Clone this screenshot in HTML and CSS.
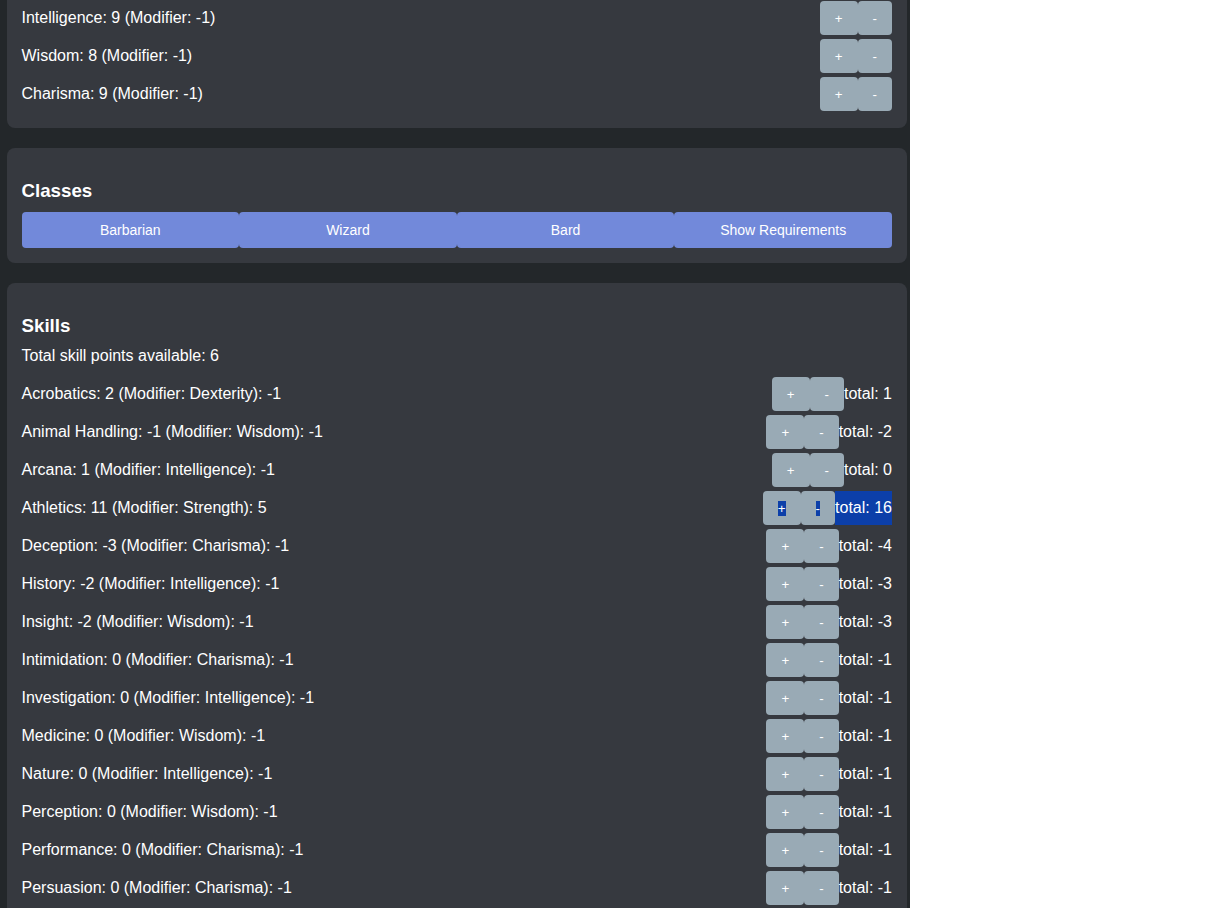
FILE: index.html
```html
<!DOCTYPE html>
<html>
<head>
<meta charset="utf-8">
<title>Character Sheet</title>
<link rel="stylesheet" href="styles.css">
</head>
<body>
<div class="app">
  <section class="panel panel-cut">
    <div class="row"><span class="label">Intelligence: 9 (Modifier: -1)</span><button class="step">+</button><button class="step">-</button></div>
    <div class="row"><span class="label">Wisdom: 8 (Modifier: -1)</span><button class="step">+</button><button class="step">-</button></div>
    <div class="row"><span class="label">Charisma: 9 (Modifier: -1)</span><button class="step">+</button><button class="step">-</button></div>
  </section>

  <section class="panel">
    <h3 class="panel-title">Classes</h3>
    <div class="class-bar">
      <button class="class-btn">Barbarian</button>
      <button class="class-btn">Wizard</button>
      <button class="class-btn">Bard</button>
      <button class="class-btn">Show Requirements</button>
    </div>
  </section>

  <section class="panel">
    <h3 class="panel-title">Skills</h3>
    <p class="points">Total skill points available: 6</p>
    <div class="row"><span class="label">Acrobatics: 2 (Modifier: Dexterity): -1</span><button class="step">+</button><button class="step">-</button><span class="total">total: 1</span></div>
    <div class="row"><span class="label">Animal Handling: -1 (Modifier: Wisdom): -1</span><button class="step">+</button><button class="step">-</button><span class="total">total: -2</span></div>
    <div class="row"><span class="label">Arcana: 1 (Modifier: Intelligence): -1</span><button class="step">+</button><button class="step">-</button><span class="total">total: 0</span></div>
    <div class="row"><span class="label">Athletics: 11 (Modifier: Strength): 5</span><button class="step"><span class="sel">+</span></button><button class="step"><span class="sel">-</span></button><span class="total total-sel">total: 16</span></div>
    <div class="row"><span class="label">Deception: -3 (Modifier: Charisma): -1</span><button class="step">+</button><button class="step">-</button><span class="total">total: -4</span></div>
    <div class="row"><span class="label">History: -2 (Modifier: Intelligence): -1</span><button class="step">+</button><button class="step">-</button><span class="total">total: -3</span></div>
    <div class="row"><span class="label">Insight: -2 (Modifier: Wisdom): -1</span><button class="step">+</button><button class="step">-</button><span class="total">total: -3</span></div>
    <div class="row"><span class="label">Intimidation: 0 (Modifier: Charisma): -1</span><button class="step">+</button><button class="step">-</button><span class="total">total: -1</span></div>
    <div class="row"><span class="label">Investigation: 0 (Modifier: Intelligence): -1</span><button class="step">+</button><button class="step">-</button><span class="total">total: -1</span></div>
    <div class="row"><span class="label">Medicine: 0 (Modifier: Wisdom): -1</span><button class="step">+</button><button class="step">-</button><span class="total">total: -1</span></div>
    <div class="row"><span class="label">Nature: 0 (Modifier: Intelligence): -1</span><button class="step">+</button><button class="step">-</button><span class="total">total: -1</span></div>
    <div class="row"><span class="label">Perception: 0 (Modifier: Wisdom): -1</span><button class="step">+</button><button class="step">-</button><span class="total">total: -1</span></div>
    <div class="row"><span class="label">Performance: 0 (Modifier: Charisma): -1</span><button class="step">+</button><button class="step">-</button><span class="total">total: -1</span></div>
    <div class="row"><span class="label">Persuasion: 0 (Modifier: Charisma): -1</span><button class="step">+</button><button class="step">-</button><span class="total">total: -1</span></div>
  </section>
</div>
</body>
</html>
```

FILE: styles.css
```css
html {
  background: #ffffff;
}

body {
  margin: 0;
  font-family: "Liberation Sans", Arial, sans-serif;
  color: #ffffff;
}

.app {
  width: 910px;
  box-sizing: border-box;
  padding: 0 3px 20px 7px;
  background: #23272a;
  min-height: 100vh;
  display: flex;
  flex-direction: column;
  gap: 20px;
}

.panel {
  display: flex;
  flex-direction: column;
  background: #36393f;
  border-radius: 8px;
  padding: 15px 15px 15px 14.5px;
}

.panel-cut {
  margin-top: -1px;
  padding-top: 0;
  border-radius: 0 0 8px 8px;
}

.panel-title {
  margin: 17px 0 10px;
  font-size: 18.72px;
  font-weight: bold;
}

.points {
  margin: 0 0 10px;
  font-size: 16px;
}

.row {
  display: flex;
  align-items: center;
  height: 34px;
  margin: 2px 0;
  font-size: 16px;
}

.label {
  flex: 1;
  padding-right: 10px;
}

.step {
  height: 34px;
  padding: 0 15px;
  border: none;
  border-radius: 4px;
  background: #99aab5;
  color: #ffffff;
  font-family: "Liberation Sans", Arial, sans-serif;
  font-size: 13.333px;
  cursor: pointer;
}

.sel {
  background: #0c3fa9;
}

.total {
  font-size: 16px;
}

.total-sel {
  align-self: stretch;
  display: flex;
  align-items: center;
  background: #0c3fa9;
}

.class-bar {
  display: flex;
}

.class-btn {
  flex: 1;
  height: 36px;
  border: none;
  border-radius: 4px;
  background: #7289da;
  color: #ffffff;
  font-family: "Liberation Sans", Arial, sans-serif;
  font-size: 14px;
  cursor: pointer;
}
```
